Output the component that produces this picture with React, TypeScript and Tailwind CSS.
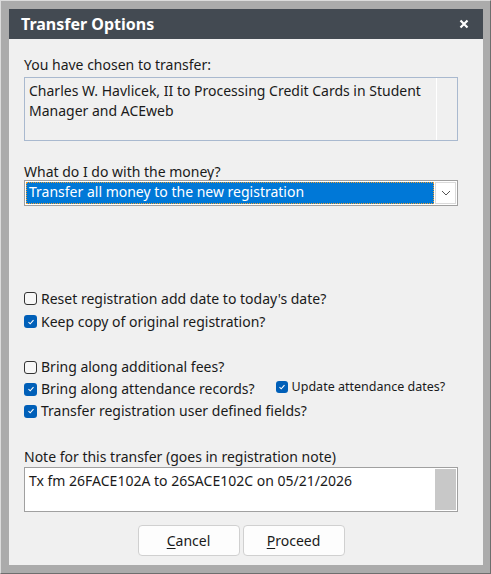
import React from "react";

function Check({ checked, small }: { checked: boolean; small?: boolean }) {
  const size = small ? "w-[12px] h-[12px]" : "w-[13px] h-[13px]";
  if (checked) {
    return (
      <span className={`${size} shrink-0 rounded-[3px] bg-[#005fb8] flex items-center justify-center`}>
        <svg width="8" height="8" viewBox="0 0 8 8">
          <path d="M1.5 4.2 L3.2 5.8 L6.5 2.2" stroke="white" strokeWidth="1.1" fill="none" />
        </svg>
      </span>
    );
  }
  return <span className={`${size} shrink-0 rounded-[3px] border border-[#333] bg-[#f7f7f7]`} />;
}

function Row({ checked, h, children }: { checked: boolean; h: string; children: React.ReactNode }) {
  return (
    <div className={`flex items-center gap-[4px] ${h}`}>
      <Check checked={checked} />
      <span>{children}</span>
    </div>
  );
}

export default function App() {
  return (
    <div
      className="w-[491px] h-[574px] bg-[#ababab] border-t border-l border-[#dcdcdc] border-r border-b border-r-[#6e6e6e] border-b-[#6e6e6e] text-[14px] text-[#1a1a1a] leading-[20px] overflow-hidden"
      style={{ fontFamily: '"Noto Sans", "Segoe UI", sans-serif' }}
    >
      <div className="ml-[8px] mt-[8px] w-[474px] h-[556px] bg-[#f0f0f0] flex flex-col">
        <div className="h-[30px] bg-[#434a52] flex items-center justify-between pl-[12px] pr-[14px]">
          <span className="text-white font-bold text-[16px]">Transfer Options</span>
          <svg width="10" height="10" viewBox="0 0 10 10">
            <path d="M1.5 1.5 L8.5 8.5 M8.5 1.5 L1.5 8.5" stroke="white" strokeWidth="2.2" />
          </svg>
        </div>
        <div className="pl-[15px] pr-[15px] pt-[16px] flex flex-col">
          <div className="leading-[20px]">You have chosen to transfer:</div>
          <div className="mt-[2px] w-[434px] h-[64px] border border-[#a9b9cf] flex">
            <div className="flex-1 pl-[4px] pt-[3px] leading-[20px]">
              Charles W. Havlicek, II to Processing Credit Cards in Student Manager and ACEweb
            </div>
            <div className="w-[21px] border-l border-white" />
          </div>

          <div className="mt-[21px] leading-[20px]">What do I do with the money?</div>
          <div className="-mt-[2px] w-[434px] h-[26px] border border-[#a0a0a0] bg-white flex p-[1px]">
            <div className="flex-1 bg-[#0078d7] text-white pl-[3px] leading-[20px] outline outline-1 outline-dotted outline-[#f0a030] -outline-offset-1">
              Transfer all money to the new registration
            </div>
            <div className="w-[21px] ml-[1px] border border-[#dadada] bg-white flex items-center justify-center">
              <svg width="10" height="6" viewBox="0 0 10 6">
                <path d="M1 1 L5 5 L9 1" stroke="#555" strokeWidth="1" fill="none" />
              </svg>
            </div>
          </div>

          <div className="mt-[81px] flex flex-col">
            <Row checked={false} h="h-[23px]">Reset registration add date to today's date?</Row>
            <Row checked={true} h="h-[23px]">Keep copy of original registration?</Row>
          </div>

          <div className="mt-[23px] flex flex-col">
            <Row checked={false} h="h-[22px]">Bring along additional fees?</Row>
            <div className="flex items-center h-[22px]">
              <div className="flex items-center gap-[4px]">
                <Check checked={true} />
                <span>Bring along attendance records?</span>
              </div>
              <div className="ml-[21px] flex items-center gap-[4px] text-[12.5px] -mt-[4px]">
                <Check checked={true} small />
                <span>Update attendance dates?</span>
              </div>
            </div>
            <Row checked={true} h="h-[22px]">Transfer registration user defined fields?</Row>
          </div>

          <div className="mt-[25px] leading-[20px]">Note for this transfer (goes in registration note)</div>
          <div className="w-[434px] h-[45px] border border-[#a0a0a0] bg-white flex">
            <div className="flex-1 pl-[4px] pt-[3px]">Tx fm 26FACE102A to 26SACE102C on 05/21/2026</div>
            <div className="w-[21px] my-[1px] mr-[1px] bg-[#c8c8c8]" />
          </div>

          <div className="mt-[13px] flex justify-center gap-[3px] pr-[10px]">
            <button className="w-[102px] h-[31px] rounded-[4px] border border-[#d0d0d0] bg-[#fdfdfd]">
              <span className="underline underline-offset-2">C</span>ancel
            </button>
            <button className="w-[102px] h-[31px] rounded-[4px] border border-[#d0d0d0] bg-[#fdfdfd]">
              <span className="underline underline-offset-2">P</span>roceed
            </button>
          </div>
        </div>
      </div>
    </div>
  );
}
